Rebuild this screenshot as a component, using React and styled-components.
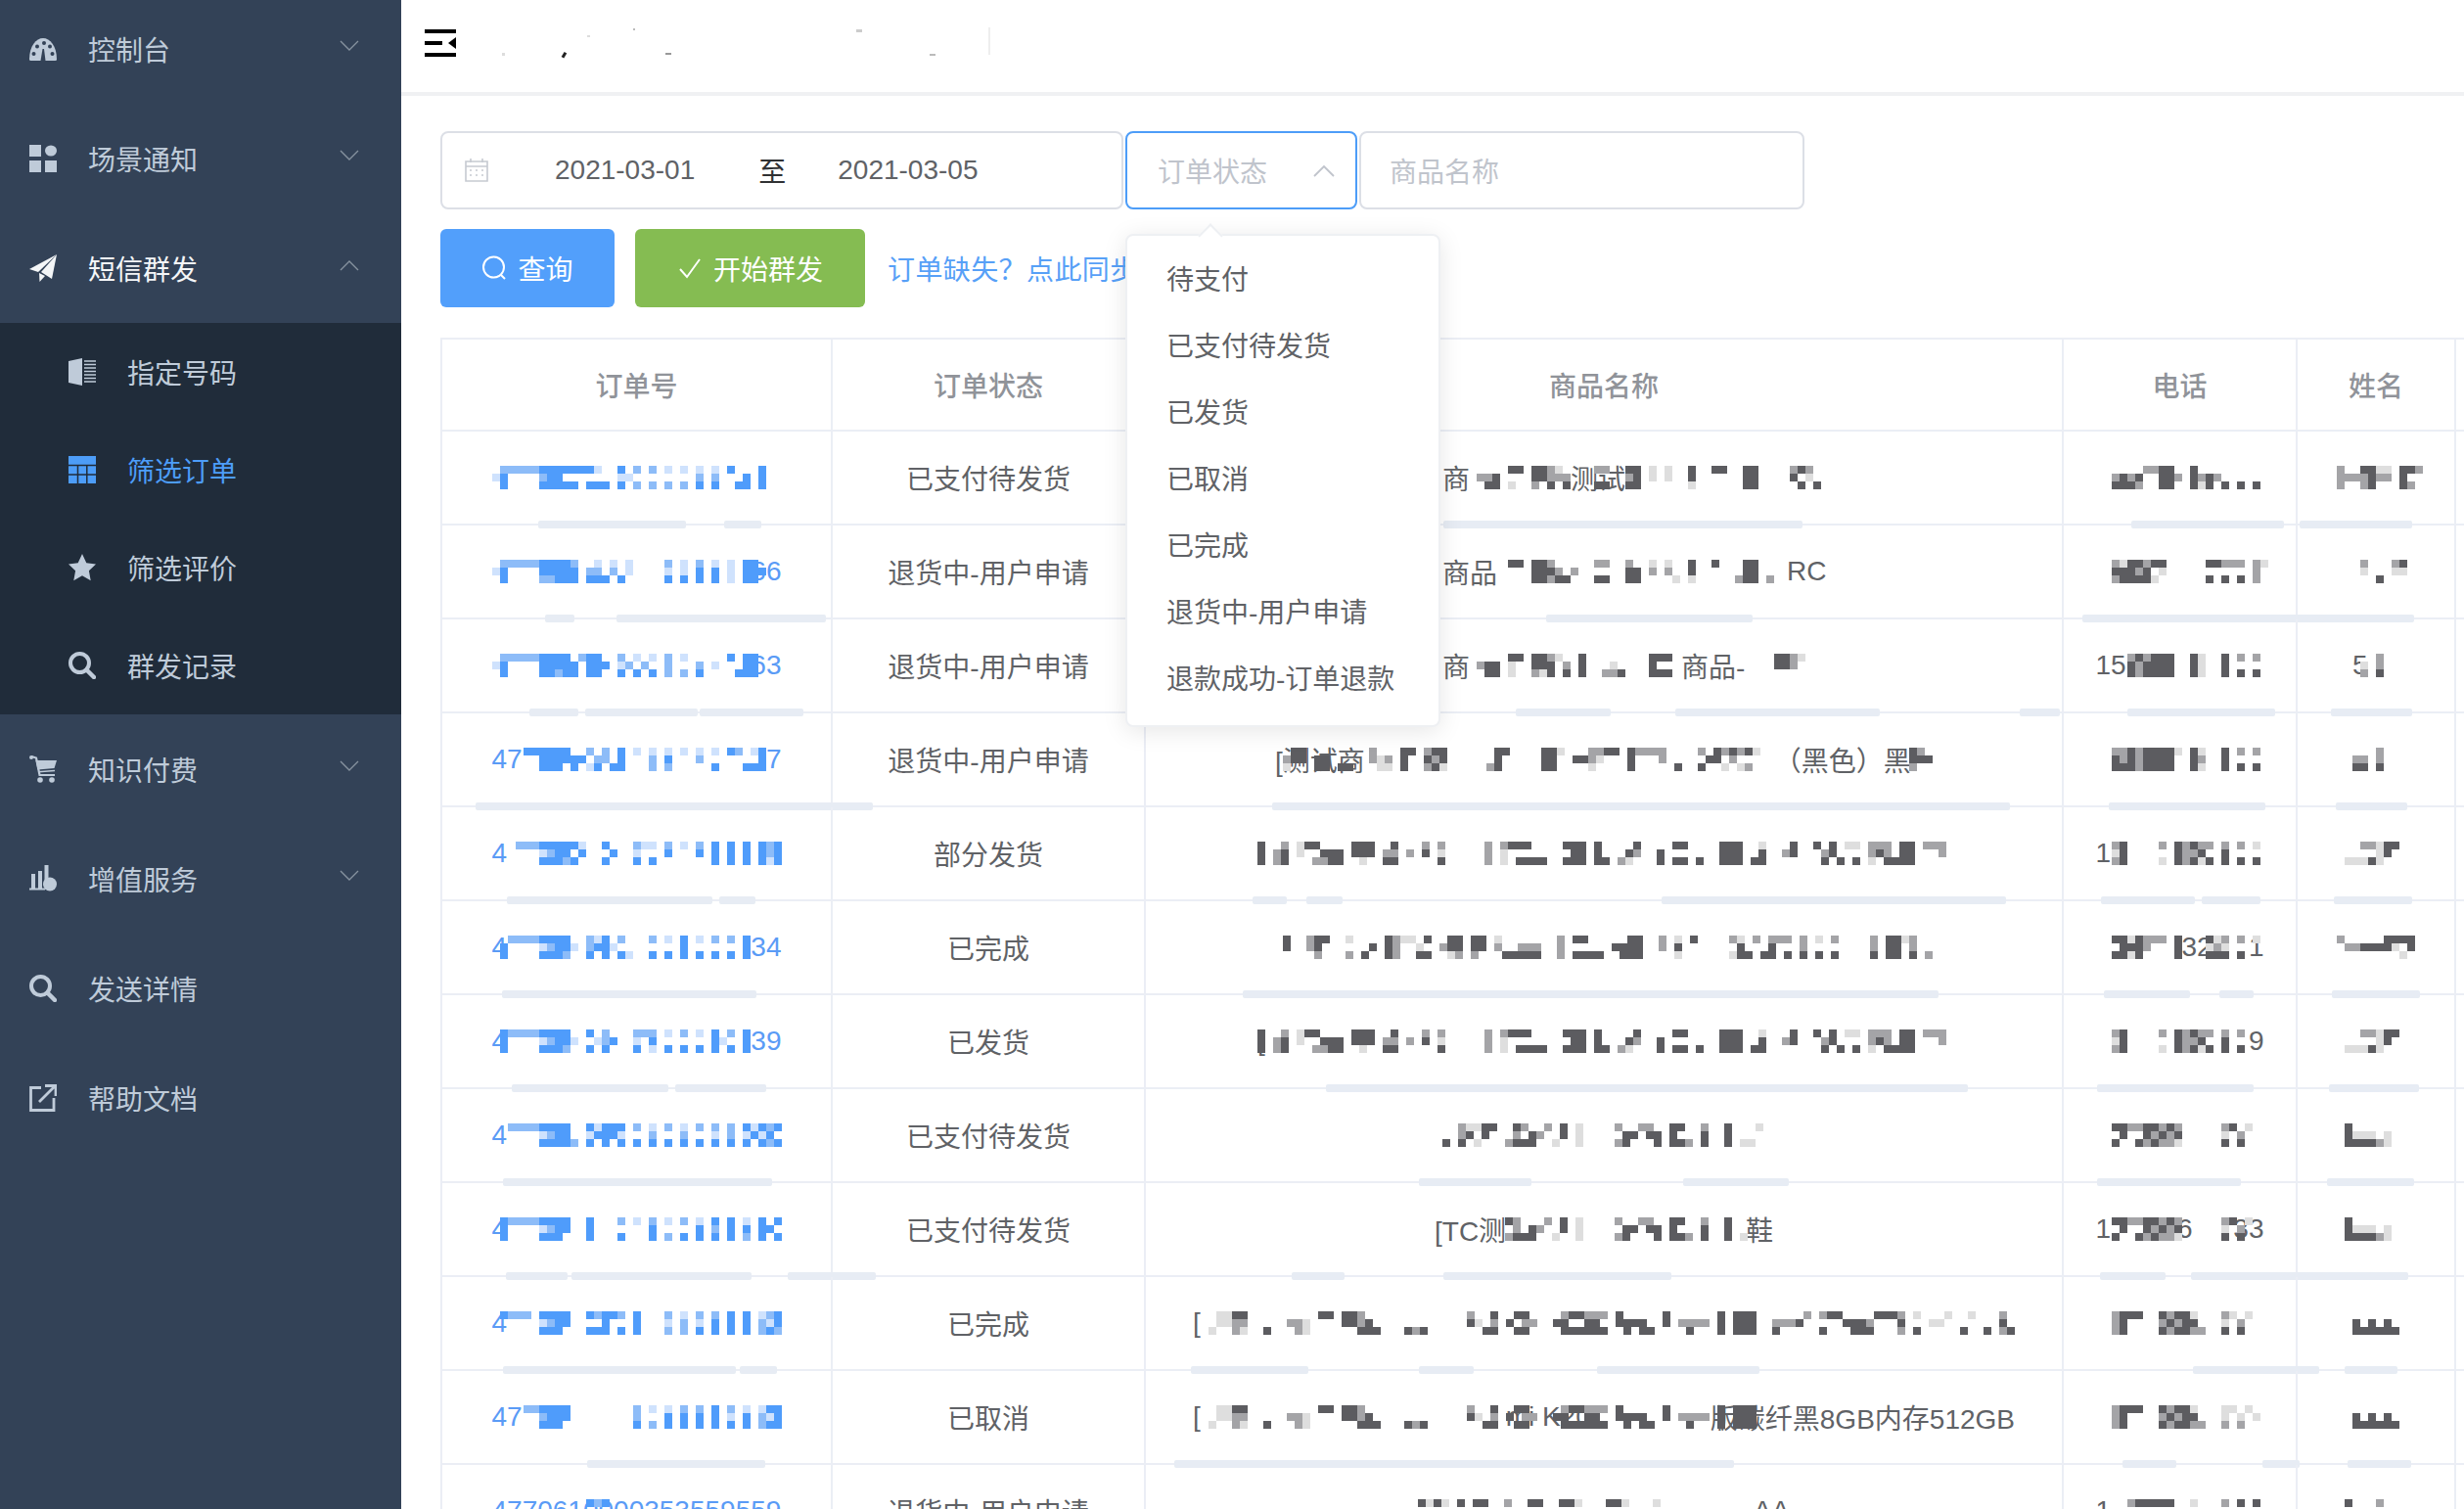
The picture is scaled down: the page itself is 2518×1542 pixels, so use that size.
import React from 'react';
import styled, { createGlobalStyle } from 'styled-components';

const FONT = '"Liberation Sans", "Noto Sans CJK SC", sans-serif';
const SIDE = '#334257';
const SUB = '#202c3a';
const BLUE_P = { 1: '#cfe2fd', 2: '#8dbcf8', 3: '#4f9cfb' };
const GRAY_P = { 1: '#dedede', 2: '#a4a4a7', 3: '#5c5c60' };
const COLS = '399px 320px 938px 239px 162px 80px';

const Global = createGlobalStyle`
  html, body { margin: 0; padding: 0; background: #fff; overflow: hidden; }
  * { box-sizing: border-box; }
  body { font-family: ${FONT}; }
`;

const Shell = styled.div`
  display: flex;
  width: 2518px;
  height: 1542px;
  overflow: hidden;
  font-family: ${FONT};
  font-size: 28px;
`;
const Sidebar = styled.aside`
  width: 410px;
  flex: none;
  background: ${SIDE};
  overflow: hidden;
`;
const NavList = styled.nav`
  margin-top: -6px;
`;
const NavRow = styled.div`
  height: 112px;
  display: flex;
  align-items: center;
  padding: 0 43px 0 30px;
  color: ${p => (p.$open ? '#f4f6f8' : '#bfcbd9')};
`;
const NavIcon = styled.svg`
  width: 28px;
  height: 28px;
  flex: none;
  fill: currentColor;
  display: block;
`;
const NavText = styled.span`
  margin-left: 32px;
  flex: 1;
  white-space: nowrap;
`;
const Chevron = styled.svg`
  width: 20px;
  height: 12px;
  flex: none;
  margin-bottom: 6px;
  fill: none;
  stroke: #86929f;
  stroke-width: 1.4;
`;
const SubMenu = styled.div`
  background: ${SUB};
`;
const SubRow = styled.div`
  height: 100px;
  display: flex;
  align-items: center;
  padding-left: 70px;
  color: ${p => (p.$active ? '#4d9df8' : '#bfcbd9')};
`;

const Main = styled.main`
  flex: 1;
  min-width: 0;
  overflow: hidden;
`;
const TopBar = styled.header`
  height: 98px;
  border-bottom: 4px solid #f0f1f3;
  display: flex;
  align-items: center;
  padding: 0 0 6px 24px;
`;
const Burger = styled.svg`
  width: 32px;
  height: 28px;
  display: block;
  flex: none;
`;
const Specks = styled.svg`
  width: 530px;
  height: 44px;
  margin-left: 44px;
  flex: none;
`;
const Content = styled.div`
  padding: 36px 0 0 40px;
`;
const FilterRow = styled.div`
  display: flex;
  gap: 2px;
`;
const DateRange = styled.div`
  width: 698px;
  height: 80px;
  border: 2px solid #dcdfe6;
  border-radius: 8px;
  display: flex;
  align-items: center;
  padding-left: 23px;
  color: #606266;
`;
const CalendarIcon = styled.svg`
  width: 24px;
  height: 24px;
  fill: none;
  stroke: #c6cad1;
  stroke-width: 1.6;
  flex: none;
`;
const DateValue = styled.span`
  margin-left: ${p => p.$gap}px;
`;
const DateSep = styled.span`
  margin-left: 65px;
  color: #303133;
`;
const SelectWrap = styled.div`
  position: relative;
  width: 237px;
  flex: none;
`;
const SelectBox = styled.div`
  height: 80px;
  border: 2px solid #4d9df8;
  border-radius: 8px;
  display: flex;
  align-items: center;
  justify-content: space-between;
  padding: 0 21px 0 31px;
  color: #c0c4cc;
`;
const SelectArrow = styled.svg`
  width: 22px;
  height: 13px;
  fill: none;
  stroke: #c0c4cc;
  stroke-width: 1.8;
`;
const Popper = styled.ul`
  position: absolute;
  left: 0;
  top: calc(100% + 25px);
  width: 322px;
  margin: 0;
  padding: 12px 0;
  list-style: none;
  background: #fff;
  border: 2px solid #eef0f3;
  border-radius: 8px;
  box-shadow: 0 4px 24px rgba(0, 0, 0, 0.1);
  z-index: 10;
  &::before {
    content: '';
    position: absolute;
    left: 76px;
    top: -9px;
    width: 16px;
    height: 16px;
    background: #fff;
    border-left: 2px solid #eef0f3;
    border-top: 2px solid #eef0f3;
    transform: rotate(45deg);
  }
`;
const PopItem = styled.li`
  height: 68px;
  line-height: 68px;
  padding-left: 40px;
  color: #606266;
  white-space: nowrap;
`;
const TextInput = styled.div`
  width: 455px;
  height: 80px;
  border: 2px solid #dcdfe6;
  border-radius: 8px;
  display: flex;
  align-items: center;
  padding-left: 29px;
  color: #c0c4cc;
`;
const ActionRow = styled.div`
  display: flex;
  align-items: center;
  margin-top: 20px;
  height: 80px;
`;
const Button = styled.button`
  height: 80px;
  width: ${p => p.$w}px;
  margin-right: 21px;
  border: 0;
  border-radius: 6px;
  background: ${p => p.$bg};
  color: #fff;
  font: inherit;
  display: flex;
  align-items: center;
  justify-content: center;
  gap: 11px;
  padding: 0;
`;
const BtnIcon = styled.svg`
  width: 26px;
  height: 26px;
  fill: none;
  stroke: #fff;
  stroke-width: 2;
`;
const SyncLink = styled.a`
  margin-left: 2px;
  color: #57a0f7;
  white-space: nowrap;
  letter-spacing: 0.4px;
`;
const Table = styled.div`
  margin-top: 31px;
  width: 2200px;
  border-top: 2px solid #ebeef5;
  border-left: 2px solid #ebeef5;
`;
const Row = styled.div`
  position: relative;
  display: grid;
  grid-template-columns: ${COLS};
  height: ${p => (p.$head ? 94 : 96)}px;
  border-bottom: 2px solid #ebeef5;
`;
const Cell = styled.div`
  display: flex;
  align-items: center;
  justify-content: center;
  border-right: 2px solid #ebeef5;
  color: ${p => (p.$head ? '#909399' : p.$link ? '#5a9bf6' : '#606266')};
  font-weight: ${p => (p.$head ? 500 : 400)};
  white-space: nowrap;
  min-width: 0;
`;
const Redact = styled.div`
  position: relative;
  flex: none;
  display: flex;
  align-items: center;
  width: ${p => p.$w}px;
  height: 24px;
`;
const Frag = styled.span`
  flex: none;
  margin-left: ${p => (p.$g === undefined ? 'auto' : `${p.$g}px`)};
`;
const MosaicSvg = styled.svg`
  position: absolute;
  left: 0;
  top: 0;
  overflow: visible;
  shape-rendering: crispEdges;
`;
const Streak = styled.i`
  position: absolute;
  bottom: -5px;
  left: ${p => p.$x}px;
  width: ${p => p.$w}px;
  height: 8px;
  background: #e7ecf4;
  border-radius: 2px;
`;

function parse(line) {
  const out = [];
  line.split(' ').filter(Boolean).forEach(tok => {
    const [start, lv] = tok.split(':');
    [...(lv || '')].forEach((l, i) => out.push([Number(start) + i, l]));
  });
  return out;
}

function Mosaic({ m, pal }) {
  if (!m) return null;
  const lines = m.split('/');
  return (
    <MosaicSvg width="8" height="24">
      {lines.map((line, y) =>
        parse(line).map(([c, l]) => (
          <rect key={`${y}-${c}`} x={c * 8} y={y * 8} width="8" height="8" fill={pal[l]} />
        ))
      )}
    </MosaicSvg>
  );
}

function Masked({ w, frags = [], m, pal }) {
  return (
    <Redact $w={w}>
      {frags.map((f, i) => (
        <Frag key={i} $g={f.g}>{f.t}</Frag>
      ))}
      <Mosaic m={m} pal={pal} />
    </Redact>
  );
}

const TAIL5 = '0:3 3:2 5:1 6:33 12:333 17:3 21:2 23:2 29:2 31:2 32:333 39:333 43:3 48:3 53:33 59:333 64:1 68:3 71:3 73:3 75:11 78:222 82:33 85:222/0:3 2:23 5:1 8:333 12:333 16:22 19:2 21:3 23:1 29:2 31:1 40:33 43:3 47:32 51:3 59:333 64:3 67:2 68:3 72:23 78:232 82:33 87:2/0:3 2:23 7:2233 13:1 16:33 23:3 29:2 31:1 33:3333 39:333 43:33 46:21 51:3 53:33 56:3 59:333 63:33 72:3 74:3 76:3 78:1 80:3333';
const TAIL8 = '3:211 6:33 10:32 14:2 16:3 18:1 23:2 26:22 30:33 34:2 37:3 41:1/3:23 6:3 10:2 12:32 16:3 18:1 24:33 27:33 30:3 34:3 37:3/1:3 3:3 5:1 9:2333 15:1 18:1 23:23 28:3 30:332 34:3 37:3 39:11';
const TAIL10 = '3:11 5:33 16:33 19:332 35:2 38:3 41:33 47:2332 51:22 54:3 60:3 67:3 69:333 78:2 80:233 87:3332 92:1 96:1 99:1 103:2/3:11 5:22 12:221 19:3323 35:31 38:2 40:3 42:22 46:33 50:33 54:33 56:33 60:3 62:2222 67:3 69:333 74:2223 83:3 84:332 90:3 94:11 103:3/2:1 5:21 9:3 13:21 21:333 27:323 37:33 41:33 47:333333 55:3 57:33 63:3 67:3 69:333 74:3 80:3 84:333 90:2 92:3 98:3 101:3 103:23';
const PH5 = '2:23 8:2 10:3 11:2 12:3 13:2 14:2 16:2 18:2 20:1/2:13 10:32 12:23 16:3/2:23 8:1 10:32 12:31 14:3 16:3 18:3 20:3';
const PH3 = '4:23 6:2 7:333 12:31 16:3 18:2 20:2/4:32 6:3 7:333 12:31 16:3/4:32 6:3 7:333 12:31 16:3 18:3 20:3';
const PH8 = '2:33 4:2 5:22 6:33 8:2 9:3 10:2 16:23 19:1/3:3 6:3 7:2 8:3 9:2 10:3 16:1 18:2/2:3 5:3 6:2 7:3 8:2 9:2 10:1 16:3 18:3';
const PH10 = '2:23 4:33 8:3 9:2 10:33 12:1 16:21 19:1/2:23 8:2 9:3 10:2 11:33 16:1 18:2/2:23 8:32 10:33 12:22 16:3 18:3';
const NM5 = '3:22 5:1 6:33/5:1 6:3/1:11 3:1 4:3 5:1';
const NM8 = '1:3/1:3 2:111 6:1/1:3333 5:2 6:1';
const NM10 = '/2:3 4:3 6:3/2:33333 7:3';

const rows = [
  {
    status: '已支付待发货',
    order: { m: '1:22222 6:3333333 13:1 16:3 18:2 20:2 22:1 24:1 26:1 28:1 30:3 34:3/0:13 6:233 16:11 26:2 28:2 32:3 34:3/1:3 6:33333 12:333 16:3 18:2 20:2 22:2 24:2 26:3 28:3 31:33 34:3' },
    goods: { w: 436, frags: [{ t: '商', g: 53 }, { t: '测试', g: 103 }], m: '15:33 18:3321 26:22 30:33 33:1 35:1 38:3 41:33 45:33 51:232/11:223 18:3322 22:2 30:23 33:1 35:1 38:3 45:33 51:3 53:1/12:33 15:1 18:2 20:3 22:3 26:33 30:33 38:1 45:33 52:3 54:3' },
    phone: { m: '6:22 8:33 12:3/2:23 4:2 5:3 8:33 10:2 12:32 14:32/2:33 4:3 5:2 8:33 12:31 14:3 16:3 18:3 20:3' },
    name: { m: '0:2 3:33 5:11 8:33 10:2/0:22 2:2 3:23 5:22 8:3/0:2 3:23 8:32' },
    streaks: [[550, 151], [740, 38], [1475, 367], [2178, 156], [2350, 115]],
  },
  {
    status: '退货中-用户申请',
    order: { frags: [{ t: '66' }], m: '1:222223 7:3332 13:1 15:1 17:1 22:2 24:1 26:2 28:1 30:1 32:33/0:13 6:33333 12:22 15:2 17:1 22:1 24:1 26:3 28:3 30:1 32:333/1:3 6:22 8:333 12:333 16:3 22:3 24:3 26:3 28:3 30:1 32:33' },
    goods: { w: 436, frags: [{ t: '商品', g: 53 }, { t: 'RC', g: 296 }], m: '15:33 18:33 20:2 26:22 30:2 33:1 35:1 38:3 41:3 45:33/18:33 20:32 23:2 30:33 33:2 35:2 38:3 45:33/18:33 20:233 26:33 30:33 36:1 38:1 44:233 48:2' },
    phone: { m: '2:21 4:33 6:23 8:3 14:33 16:22 18:2 20:21/2:33 4:32 6:3 8:1 20:2/2:23 4:33 6:31 14:3 16:3 18:3 20:2' },
    name: { m: '3:2 7:23/3:1 7:11/5:3' },
    streaks: [[557, 30], [630, 214], [1580, 211], [2128, 339]],
  },
  {
    status: '退货中-用户申请',
    order: { frags: [{ t: '63' }], m: '1:22222 6:3333 11:233 16:2 18:1 20:1 22:2 24:1 30:3 32:33/0:13 6:333 9:33 12:333 16:12 19:2 22:2 26:2 28:1 32:33/1:3 6:33 8:23 10:3 12:33 16:3 18:3 20:3 22:2 24:2 26:3 31:333' },
    goods: { w: 436, frags: [{ t: '商', g: 53 }, { t: '商品-', g: 216 }], m: '15:33 18:33 20:2 21:1 24:3 33:333 49:3 50:32 52:1/11:233 15:1 18:33 20:3 22:2 24:3 28:1 33:3 49:332/12:33 15:1 18:21 20:3 22:3 24:3 27:223 33:333' },
    phone: { frags: [{ t: '15', g: 0 }], m: PH3 },
    name: { frags: [{ t: '5', g: 16 }], m: '5:2/3:1 5:2/3:2 5:3' },
    streaks: [[541, 50], [598, 115], [715, 106], [1549, 97], [1712, 209], [2064, 41], [2174, 151], [2382, 83]],
  },
  {
    status: '退货中-用户申请',
    order: { frags: [{ t: '47', g: 0 }, { t: '7' }], m: '4:33333 9:3 12:2 14:2 16:3 18:1 20:1 22:1 24:1 26:1 28:1 30:32 33:1 34:3/6:3333 10:33 13:22 16:3 20:2 22:3 26:2 34:3/6:33 8:3 10:3 12:1 13:3 15:3 16:3 20:2 22:2 28:3 32:33 34:3' },
    goods: { w: 672, frags: [{ t: '[测试商', g: 0 }, { t: '（黑色）黑', g: 418 }], m: '2:33 12:2 16:33 19:233 28:33 34:33 36:1 40:2233 45:3 46:2222 54:2 56:3232 60:31 81:32/1:233 5:33 12:212 16:3 19:323 28:3 34:33 38:3321 45:3 49:2 55:33 58:2 81:333/1:1 5:33 8:33 13:11 16:3 19:231 27:23 34:33 40:1 45:3 51:3 54:3 57:1 59:12 81:2' },
    phone: { m: '2:22 4:32 6:3 7:333 10:1 12:31 16:3 18:2 20:2/2:32 4:32 6:3 7:333 12:32 16:3/2:33 4:32 6:3 7:333 12:31 16:3 18:3 20:3' },
    name: { m: '5:2/2:22 5:2/2:33 5:3' },
    streaks: [[486, 406], [1300, 750], [1800, 254], [2155, 160], [2387, 73]],
  },
  {
    status: '部分发货',
    order: { frags: [{ t: '4', g: 0 }], m: '3:222 6:33333 11:1 14:3 18:211 22:2 24:1 26:2 28:3 30:3 32:3 34:323/6:12 8:33 11:3 15:3 18:1 22:3 26:3 28:3 30:3 32:3 34:323/6:333 9:23 14:3 18:3 20:3 28:3 30:3 32:3 34:313' },
    goods: { w: 708, m: TAIL5 },
    phone: { frags: [{ t: '1', g: 0 }], m: PH5 },
    name: { m: NM5 },
    streaks: [[518, 210], [735, 37], [1280, 35], [1335, 37], [1698, 352], [2147, 96], [2250, 60], [2385, 80]],
  },
  {
    status: '已完成',
    order: { frags: [{ t: '4', g: 0 }, { t: '34' }], m: '2:2222 6:3333 12:213 16:2 20:2 22:1 24:3 26:1 28:2 30:2 32:3/1:3 6:12 8:33 10:1 12:2 13:33 15:1 24:3 32:3/1:3 6:333 9:2 12:3 14:3 16:31 20:3 22:3 24:3 26:3 28:3 30:3 32:3' },
    goods: { w: 672, m: '1:3 4:233 9:1 14:32 16:11 19:3 22:33 25:33 28:1 36:2 38:33 45:33 49:2 51:1 53:3 58:21 61:2 63:222 67:2 69:1 71:2 76:2 78:3312/1:3 4:23 12:3 14:32 18:1 21:233 25:33 28:2 31:222 36:2 43:33 45:33 49:2 51:3 59:3 63:3 67:2 76:2 78:33 81:2/5:2 9:2 11:3 14:32 18:33 22:12 25:2 29:33333 36:2 38:3333 44:333 51:1 58:133 62:33 65:3 67:3 69:3 71:3 76:3 78:33 81:3 83:2' },
    phone: { frags: [{ t: '32', g: 88 }, { t: '1' }], m: '2:33 4:1 5:3 6:222 10:3 14:3 15:1 16:2 18:2 20:1/3:33 5:32 10:3 14:12 16:1/2:33 4:1 5:3 10:3 14:33 16:3 18:3' },
    name: { m: '0:2 6:3 7:333/1:22 3:333 6:3 7:1 9:3/8:1' },
    streaks: [[513, 260], [1270, 711], [2150, 88], [2268, 35], [2383, 90]],
  },
  {
    status: '已发货',
    order: { frags: [{ t: '4', g: 0 }, { t: '39' }], m: '1:3 2:2222 6:3333 12:3 14:2 18:22 20:2 22:1 24:2 26:1 28:3 30:2 32:3/1:3 6:12 8:33 10:1 13:12 15:3 18:1 20:3 28:31 32:3/1:3 6:333 9:2 12:3 14:3 18:3 20:1 22:3 24:3 26:3 28:3 30:3 32:3' },
    goods: { w: 708, frags: [{ t: '[', g: 0 }], m: TAIL5 },
    phone: { frags: [{ t: '9' }], m: '2:23 8:2 10:3 11:2 12:3 13:2 14:2 16:2 18:2/2:13 10:32 12:23 16:3/2:23 8:1 10:32 12:31 14:3 16:3 18:3' },
    name: { m: NM5 },
    streaks: [[523, 160], [690, 93], [1355, 656], [2143, 160], [2380, 92]],
  },
  {
    status: '已支付待发货',
    order: { frags: [{ t: '4', g: 0 }], m: '2:2222 6:3333 12:31 14:33 16:3 18:2 20:1 22:2 24:1 26:2 28:2 30:2 32:31 34:32 36:3/6:12 8:33 12:13 14:33 16:1 20:2 24:2 28:1 30:2 32:13 34:13/6:33 8:33 10:2 12:3 14:3 16:3 18:3 20:3 22:3 24:3 26:3 28:3 30:3 32:3 34:32 36:3' },
    goods: { w: 346, m: TAIL8 },
    phone: { m: PH8 },
    name: { m: NM8 },
    streaks: [[514, 275], [1450, 115], [1720, 108], [2143, 147], [2378, 89]],
  },
  {
    status: '已支付待发货',
    order: { frags: [{ t: '4', g: 0 }], m: '1:3 2:2222 6:3333 12:3 16:2 18:1 20:2 22:1 24:2 26:1 28:3 30:3 32:1 34:3 36:3/1:3 6:12 8:33 12:3 20:3 26:3 28:2 30:3 32:3 34:33/1:3 6:33 8:3 12:3 16:3 20:3 22:2 24:3 26:3 28:3 30:3 32:2 34:3 36:3' },
    goods: { w: 346, frags: [{ t: '[TC测', g: 0 }, { t: '鞋' }], m: '9:33 10:2 14:2 16:3 18:1 23:2 26:22 30:33 34:2 37:3/10:2 12:32 16:3 18:1 24:33 27:33 30:3 34:3 37:3/9:2333 15:1 18:1 23:23 28:3 30:332 34:3 37:3 39:1' },
    phone: { frags: [{ t: '1', g: 0 }, { t: '6', g: 68 }, { t: '33' }], m: PH8 },
    name: { m: NM8 },
    streaks: [[517, 63], [584, 184], [805, 90], [1320, 54], [1475, 233], [2146, 67], [2239, 222]],
  },
  {
    status: '已完成',
    order: { frags: [{ t: '4', g: 0 }], m: '1:3 2:222 6:3333 12:32 14:33 16:2 18:3 22:2 24:1 26:2 28:2 30:3 32:3 34:123/6:12 8:33 14:3 18:3 22:1 24:2 26:1 28:3 30:3 32:3 34:213/6:33 8:3 12:33 14:3 16:3 18:3 22:2 24:2 26:3 28:3 30:3 32:3 34:232' },
    goods: { w: 840, frags: [{ t: '[', g: 0 }], m: TAIL10 },
    phone: { m: PH10 },
    name: { m: NM10 },
    streaks: [[514, 238], [756, 38], [1217, 120], [1450, 56], [1632, 166], [2241, 129], [2396, 54]],
  },
  {
    status: '已取消',
    order: { frags: [{ t: '47', g: 0 }], m: '4:222 6:3333 18:2 20:1 22:1 24:2 26:2 28:3 30:2 32:1 34:133/6:23 8:33 18:2 22:3 24:3 26:3 28:3 30:1 32:3 34:213/6:33 8:3 18:3 20:2 22:3 24:3 26:3 28:3 30:3 32:3 34:233' },
    goods: { w: 840, frags: [{ t: '[', g: 0 }, { t: 'mi K20', g: 312 }, { t: '版碳纤黑8GB内存512GB' }], m: TAIL10.split('/').map(l => parse(l).filter(([c]) => c < 74).reduce((a, [c, v]) => `${a} ${c}:${v}`, '')).join('/') },
    phone: { m: '2:23 4:33 8:3 9:2 10:33 12:1 16:11 19:1/2:23 8:2 9:3 10:2 11:33 16:1 18:1 20:1/2:23 8:32 10:33 12:22 16:2 18:2' },
    name: { m: NM10 },
    streaks: [[600, 182], [1200, 572], [2169, 55], [2312, 38], [2399, 65]],
  },
  {
    status: '退货中-用户申请',
    order: { frags: [{ t: '4770610000353559559', g: 0 }], m: '12:323' },
    goods: { w: 380, frags: [{ t: 'AA' }], m: '0:3131 5:3 7:33 11:2 14:33 18:33 20:1 24:33 26:1 30:1' },
    phone: { frags: [{ t: '1', g: 0 }], m: '4:23 6:33 8:33 12:1 16:2 18:3 20:3' },
    name: { m: '1:3 5:2' },
    streaks: [],
  },
];

const menuTail = ['待支付', '已支付待发货', '已发货', '已取消', '已完成', '退货中-用户申请', '退款成功-订单退款'];

const Dash = () => (
  <NavIcon viewBox="0 0 28 28">
    <path d="M0 24.500C0 11 7 3 14 3s14 8 14 21.500q0 1.500-1.500 1.500H1.500Q0 26 0 24.500Z" />
    <g fill={SIDE}>
      <circle cx="4.500" cy="19" r="2" />
      <circle cx="8" cy="11.500" r="2" />
      <circle cx="15" cy="8" r="2" />
      <circle cx="21" cy="11.500" r="2" />
      <circle cx="23.500" cy="19" r="2" />
      <path d="M11.500 26l2-12h1.500l1.500 12Z" />
    </g>
  </NavIcon>
);
const Tiles = () => (
  <NavIcon viewBox="0 0 28 28">
    <rect x="0" y="0" width="12" height="12" />
    <ellipse cx="22" cy="6" rx="6" ry="5.500" />
    <rect x="0" y="16" width="12" height="12" />
    <rect x="16" y="16" width="12" height="12" />
  </NavIcon>
);
const Plane = () => (
  <NavIcon viewBox="0 0 28 28">
    <path d="M0 15 28 0 9 18Z" />
    <path d="M28 0 23 25 12 18Z" />
    <path d="M10 19 10.500 28 16 22Z" />
  </NavIcon>
);
const Book = () => (
  <NavIcon viewBox="0 0 28 28">
    <path d="M0 3 14 0V28L0 25Z" />
    <path d="M16 3h12M16 6.500h12M16 10h12M16 13.500h12M16 17h12M16 20.500h12M16 24h12" stroke="currentColor" strokeWidth="1.500" />
  </NavIcon>
);
const Grid = () => (
  <NavIcon viewBox="0 0 28 28">
    <rect width="28" height="28" />
    <path d="M0 9.500h28M0 19h28M9.500 9.500V28M18.800 9.500V28" stroke={SUB} strokeWidth="1.500" />
  </NavIcon>
);
const Star = () => (
  <NavIcon viewBox="0 0 28 28">
    <path d="M14 0l4.300 9.200 9.700 1.200-7.100 6.800 1.800 10.100L14 22.300 5.300 27.300l1.800-10.100L0 10.400l9.700-1.200Z" />
  </NavIcon>
);
const Search = () => (
  <NavIcon viewBox="0 0 28 28">
    <circle cx="11.500" cy="11.500" r="9.500" fill="none" stroke="currentColor" strokeWidth="4" />
    <path d="M18.500 18.500 26 26" fill="none" stroke="currentColor" strokeWidth="4.500" strokeLinecap="round" />
  </NavIcon>
);
const Cart = () => (
  <NavIcon viewBox="0 0 28 28">
    <circle cx="2" cy="2" r="2" />
    <path d="M2 1 7 2.500 10.500 20H26" fill="none" stroke="currentColor" strokeWidth="2.200" />
    <path d="M6.500 5H28L25.500 13 8.500 14.500Z" />
    <path d="M9 16.800 26 15.500" stroke="currentColor" strokeWidth="1.500" />
    <circle cx="11" cy="25" r="2.800" />
    <circle cx="23" cy="25" r="2.800" />
  </NavIcon>
);
const Bars = () => (
  <NavIcon viewBox="0 0 28 28">
    <rect x="2" y="9" width="4" height="15" />
    <rect x="9" y="6" width="4" height="18" />
    <rect x="15.500" y="0" width="4" height="20" />
    <rect x="0" y="23.500" width="16" height="2" />
    <circle cx="21" cy="19.500" r="7" />
  </NavIcon>
);
const External = () => (
  <NavIcon viewBox="0 0 28 28" fill="none">
    <path d="M12 3.500H1.500V26.500H25V14" fill="none" stroke="currentColor" strokeWidth="2.800" />
    <path d="M10 18 26 2M16 1.500H27V12" fill="none" stroke="currentColor" strokeWidth="2.800" />
  </NavIcon>
);

const Chev = ({ up }) => (
  <Chevron viewBox="0 0 20 12">
    <path d={up ? 'M1 11 10 2l9 9' : 'M1 1l9 9 9-9'} />
  </Chevron>
);

const NavItem = ({ icon, label, open, chevron = true }) => (
  <NavRow $open={open}>
    {icon}
    <NavText>{label}</NavText>
    {chevron && <Chev up={open} />}
  </NavRow>
);
const SubItem = ({ icon, label, active }) => (
  <SubRow $active={active}>
    {icon}
    <NavText>{label}</NavText>
  </SubRow>
);

export default function App() {
  return (
    <Shell>
      <Global />
      <Sidebar>
        <NavList>
          <NavItem icon={<Dash />} label="控制台" />
          <NavItem icon={<Tiles />} label="场景通知" />
          <NavItem icon={<Plane />} label="短信群发" open />
          <SubMenu>
            <SubItem icon={<Book />} label="指定号码" />
            <SubItem icon={<Grid />} label="筛选订单" active />
            <SubItem icon={<Star />} label="筛选评价" />
            <SubItem icon={<Search />} label="群发记录" />
          </SubMenu>
          <NavItem icon={<Cart />} label="知识付费" />
          <NavItem icon={<Bars />} label="增值服务" />
          <NavItem icon={<Search />} label="发送详情" chevron={false} />
          <NavItem icon={<External />} label="帮助文档" chevron={false} />
        </NavList>
      </Sidebar>
      <Main>
        <TopBar>
          <Burger viewBox="0 0 32 28">
            <rect x="0" y="0" width="32" height="4" />
            <rect x="0" y="12" width="18" height="4" />
            <rect x="0" y="24" width="32" height="4" />
            <path d="M32 8v12l-8-6Z" />
          </Burger>
          <Specks viewBox="0 0 530 44">
            <rect x="65" y="31" width="3" height="6" fill="#222" transform="rotate(30 66 34)" />
            <rect x="170" y="32" width="6" height="2" fill="#999" />
            <rect x="3" y="32" width="3" height="3" fill="#ddd" />
            <rect x="137" y="7" width="2" height="2" fill="#bbb" />
            <rect x="365" y="8" width="6" height="3" fill="#ccc" />
            <rect x="440" y="33" width="6" height="2" fill="#bbb" />
            <rect x="500" y="6" width="2" height="28" fill="#eee" />
            <rect x="90" y="14" width="3" height="2" fill="#ddd" />
          </Specks>
        </TopBar>
        <Content>
          <FilterRow>
            <DateRange>
              <CalendarIcon viewBox="0 0 24 24">
                <path d="M1 3h22v20H1ZM1 8h22M6 0v4M18 0v4" />
                <path d="M5 12h2M11 12h2M17 12h2M5 17h2M11 17h2M17 17h2" />
              </CalendarIcon>
              <DateValue $gap={68}>2021-03-01</DateValue>
              <DateSep>至</DateSep>
              <DateValue $gap={53}>2021-03-05</DateValue>
            </DateRange>
            <SelectWrap>
              <SelectBox>
                订单状态
                <SelectArrow viewBox="0 0 22 13">
                  <path d="M1 12 11 2l10 10" />
                </SelectArrow>
              </SelectBox>
              <Popper>
                {menuTail.map(m => (
                  <PopItem key={m}>{m}</PopItem>
                ))}
              </Popper>
            </SelectWrap>
            <TextInput>商品名称</TextInput>
          </FilterRow>
          <ActionRow>
            <Button $w={178} $bg="#529ffb">
              <BtnIcon viewBox="0 0 26 26">
                <circle cx="12.500" cy="12" r="10.500" />
                <path d="M20 20l4 4" />
              </BtnIcon>
              查询
            </Button>
            <Button $w={235} $bg="#85bc52">
              <BtnIcon viewBox="0 0 26 26">
                <path d="M3 14l7 8L23 4" />
              </BtnIcon>
              开始群发
            </Button>
            <SyncLink>订单缺失？点此同步</SyncLink>
          </ActionRow>
          <Table>
            <Row $head>
              {['订单号', '订单状态', '商品名称', '电话', '姓名', ''].map((h, i) => (
                <Cell key={i} $head>{h}</Cell>
              ))}
            </Row>
            {rows.map((r, i) => (
              <Row key={i}>
                <Cell $link>
                  <Masked w={296} pal={BLUE_P} {...r.order} />
                </Cell>
                <Cell>{r.status}</Cell>
                <Cell>
                  <Masked pal={GRAY_P} {...r.goods} />
                </Cell>
                <Cell>
                  <Masked w={172} pal={GRAY_P} {...r.phone} />
                </Cell>
                <Cell>
                  <Masked w={80} pal={GRAY_P} {...r.name} />
                </Cell>
                <Cell />
                {r.streaks.map(([x, w], k) => (
                  <Streak key={k} $x={x - 452} $w={w} />
                ))}
              </Row>
            ))}
          </Table>
        </Content>
      </Main>
    </Shell>
  );
}
